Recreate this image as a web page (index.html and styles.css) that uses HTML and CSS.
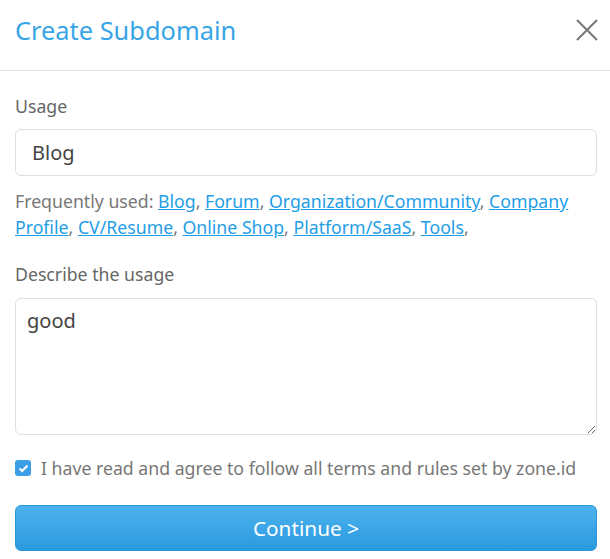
FILE: index.html
```html
<!DOCTYPE html>
<html lang="en">
<head>
  <meta charset="UTF-8" />
  <meta name="viewport" content="width=device-width, initial-scale=1" />
  <title>Create Subdomain</title>
  <link rel="stylesheet" href="styles.css">
</head>
<body>
  <div id="subdomain-dialog">
    <div class="dialog-header">
      <h2>Create Subdomain</h2>
      <button class="btn-close" aria-label="Close">
        <svg width="22" height="22" viewBox="0 0 22 22">
          <path d="M1 1 L21 21 M21 1 L1 21" stroke="#777" stroke-width="2" fill="none" />
        </svg>
      </button>
    </div>

    <div class="dialog-body">
      <label class="field-label" for="usage">Usage</label>
      <input id="usage" class="field-input" type="text" value="Blog" />

      <div class="hint">
        Frequently used: <a href="#">Blog</a>, <a href="#">Forum</a>, <a href="#">Organization/Community</a>, <a href="#">Company Profile</a>, <a href="#">CV/Resume</a>, <a href="#">Online Shop</a>, <a href="#">Platform/SaaS</a>, <a href="#">Tools</a>,
      </div>

      <label class="field-label label-gap" for="describe">Describe the usage</label>
      <textarea id="describe" class="field-textarea">good</textarea>

      <label class="agree">
        <span class="checkbox">
          <svg width="11" height="9" viewBox="0 0 11 9">
            <path d="M1.5 4.5 L4.2 7 L9.5 1.5" stroke="#fff" stroke-width="2" fill="none" />
          </svg>
        </span>
        I have read and agree to follow all terms and rules set by zone.id
      </label>

      <button class="btn-continue">Continue &gt;</button>
    </div>
  </div>
</body>
</html>
```

FILE: styles.css
```css
body {
  margin: 0;
  background: #fff;
  font-family: 'Noto Sans', 'Open Sans', sans-serif;
}

#subdomain-dialog {
  width: 610px;
}

.dialog-header {
  display: flex;
  justify-content: space-between;
  align-items: center;
  height: 71px;
  padding: 0 12px 10px 15px;
  border-bottom: 1px solid #e0e0e0;
  box-sizing: border-box;
}

.dialog-header h2 {
  margin: 0;
  font-size: 25.4px;
  font-weight: 400;
  color: #38a5e7;
}

.btn-close {
  background: none;
  border: none;
  padding: 0;
  display: flex;
  cursor: pointer;
}

.dialog-body {
  padding: 24px 13px 0 15px;
}

.field-label {
  display: block;
  font-size: 17.7px;
  line-height: 22px;
  color: #666;
  margin-bottom: 12px;
}

.label-gap {
  margin-bottom: 13px;
}

.field-input,
.field-textarea {
  display: block;
  width: 100%;
  box-sizing: border-box;
  border: 1px solid #dcdfe6;
  border-radius: 6px;
  font-family: inherit;
  font-size: 20px;
  color: #444;
  outline: none;
}

.field-input {
  height: 47px;
  padding: 0 16px;
}

.field-textarea {
  height: 137px;
  padding: 8px 11px;
  resize: vertical;
}

.hint {
  margin: 12px 0 23px;
  font-size: 17.7px;
  line-height: 26px;
  color: #777;
}

.hint a {
  color: #1f9ee6;
}

.agree {
  display: flex;
  align-items: center;
  gap: 10px;
  margin: 21px 0 25px;
  font-size: 17.7px;
  color: #777;
}

.checkbox {
  width: 16px;
  height: 16px;
  border-radius: 3px;
  background: #3a9fe6;
  display: flex;
  align-items: center;
  justify-content: center;
}

.btn-continue {
  display: block;
  width: 100%;
  height: 46px;
  border: 1px solid #2b98dc;
  border-radius: 6px;
  background: linear-gradient(to bottom, #4db2ed, #2a9ae0);
  color: #fff;
  font-family: inherit;
  font-size: 20.8px;
  cursor: pointer;
}
```
